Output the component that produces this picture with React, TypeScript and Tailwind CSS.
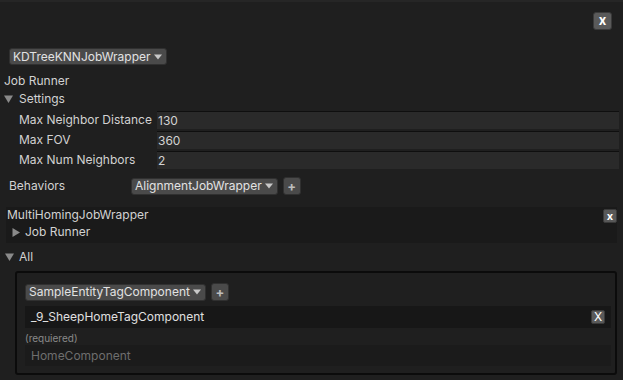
import React from "react";

function Caret() {
  return (
    <svg width="8" height="6" viewBox="0 0 8 6" className="ml-[3px] shrink-0">
      <path d="M0 0.5 L8 0.5 L4 5.5 Z" fill="#c8c8c8" />
    </svg>
  );
}

function Foldout({ open }: { open: boolean }) {
  return open ? (
    <svg width="9" height="8" viewBox="0 0 9 8" className="shrink-0">
      <path d="M0 0.5 L9 0.5 L4.5 8 Z" fill="#8a8a8a" />
    </svg>
  ) : (
    <svg width="8" height="9" viewBox="0 0 8 9" className="shrink-0">
      <path d="M0.5 0 L8 4.5 L0.5 9 Z" fill="#8a8a8a" />
    </svg>
  );
}

function Dropdown({ label, className = "" }: { label: string; className?: string }) {
  return (
    <div
      className={`flex h-[17px] items-center rounded-[3px] border border-[#303030] bg-[#4a4a4a] pl-[3px] pr-[4px] text-[#e2e2e2] ${className}`}
    >
      <span>{label}</span>
      <Caret />
    </div>
  );
}

function PlusButton() {
  return (
    <div className="flex h-[18px] w-[18px] items-center justify-center rounded-[3px] border border-[#303030] bg-[#4a4a4a] text-[13px] font-bold leading-none text-[#bdbdbd]">
      +
    </div>
  );
}

function Field({ label, value }: { label: string; value: string }) {
  return (
    <div className="flex h-[20px] items-start">
      <div className="w-[157px] shrink-0 whitespace-nowrap pl-[19px] leading-[18px]">{label}</div>
      <div className="mr-[4px] h-[18px] flex-1 border-t border-[#0f0f0f] bg-[#2a2a2a] pl-[1px] leading-[17px]">
        {value}
      </div>
    </div>
  );
}

export default function App() {
  return (
    <div
      className="h-[380px] w-[623px] overflow-hidden border-t-2 border-[#262626] bg-[#1f1f1f] text-[12px] text-[#d2d2d2]"
      style={{ fontFamily: "Inter, 'Noto Sans', sans-serif" }}
    >
      <div className="flex justify-end pr-[11px] pt-[10px]">
        <div className="flex h-[18px] w-[19px] items-center justify-center rounded-[3px] border border-[#3a3a3a] bg-[#5a5a5a] pb-[2px] text-[13px] font-bold leading-none text-white">
          x
        </div>
      </div>

      <div className="mt-[18px] flex pl-[9px]">
        <Dropdown label="KDTreeKNNJobWrapper" />
      </div>

      <div className="mt-[7px] pl-[4px] leading-[18px]">Job Runner</div>
      <div className="flex h-[18px] items-center gap-[6px] pl-[4px]">
        <Foldout open />
        <span>Settings</span>
      </div>

      <div className="mt-[3px]">
        <Field label="Max Neighbor Distance" value="130" />
        <Field label="Max FOV" value="360" />
        <Field label="Max Num Neighbors" value="2" />
      </div>

      <div className="mt-[6px] flex items-center">
        <div className="w-[131px] shrink-0 pl-[9px]">Behaviors</div>
        <Dropdown label="AlignmentJobWrapper" />
        <div className="ml-[5px]">
          <PlusButton />
        </div>
      </div>

      <div className="mx-[6px] mt-[12px] mr-[6px] bg-[#1a1a1a] pb-[2px]">
        <div className="flex h-[16px] items-center justify-between pl-[1px]">
          <span>MultiHomingJobWrapper</span>
          <div className="mt-[2px] flex h-[14px] w-[14px] items-center justify-center rounded-[2px] border border-[#3a3a3a] bg-[#585858] text-[11px] font-bold leading-none text-white">
            x
          </div>
        </div>
        <div className="flex h-[18px] items-center gap-[5px] pl-[6px]">
          <Foldout open={false} />
          <span>Job Runner</span>
        </div>
      </div>

      <div className="mt-[5px] flex h-[18px] items-center gap-[5px] pl-[5px]">
        <Foldout open />
        <span>All</span>
      </div>

      <div className="mb-[5px] ml-[15px] mr-[6px] mt-[5px] rounded-[3px] border-2 border-[#0b0b0b] pb-[7px] pl-[8px] pr-[4px] pt-[10px]">
        <div className="flex items-center">
          <Dropdown label="SampleEntityTagComponent" />
          <div className="ml-[5px]">
            <PlusButton />
          </div>
        </div>
        <div className="mt-[5px] flex h-[22px] items-center justify-between bg-[#171717] pl-[6px] pr-[6px] text-[#e0e0e0]">
          <span>_9_SheepHomeTagComponent</span>
          <div className="flex h-[14px] w-[14px] items-center justify-center rounded-[2px] border border-[#3a3a3a] bg-[#5a5a5a] text-[12px] leading-none text-white">
            X
          </div>
        </div>
        <div className="mt-[3px] text-[10px] leading-[14px] text-[#8a8a8a]">(requiered)</div>
        <div className="flex h-[21px] items-center bg-[#1b1b1b] pl-[6px] text-[#6e6e6e]">
          HomeComponent
        </div>
      </div>
    </div>
  );
}
